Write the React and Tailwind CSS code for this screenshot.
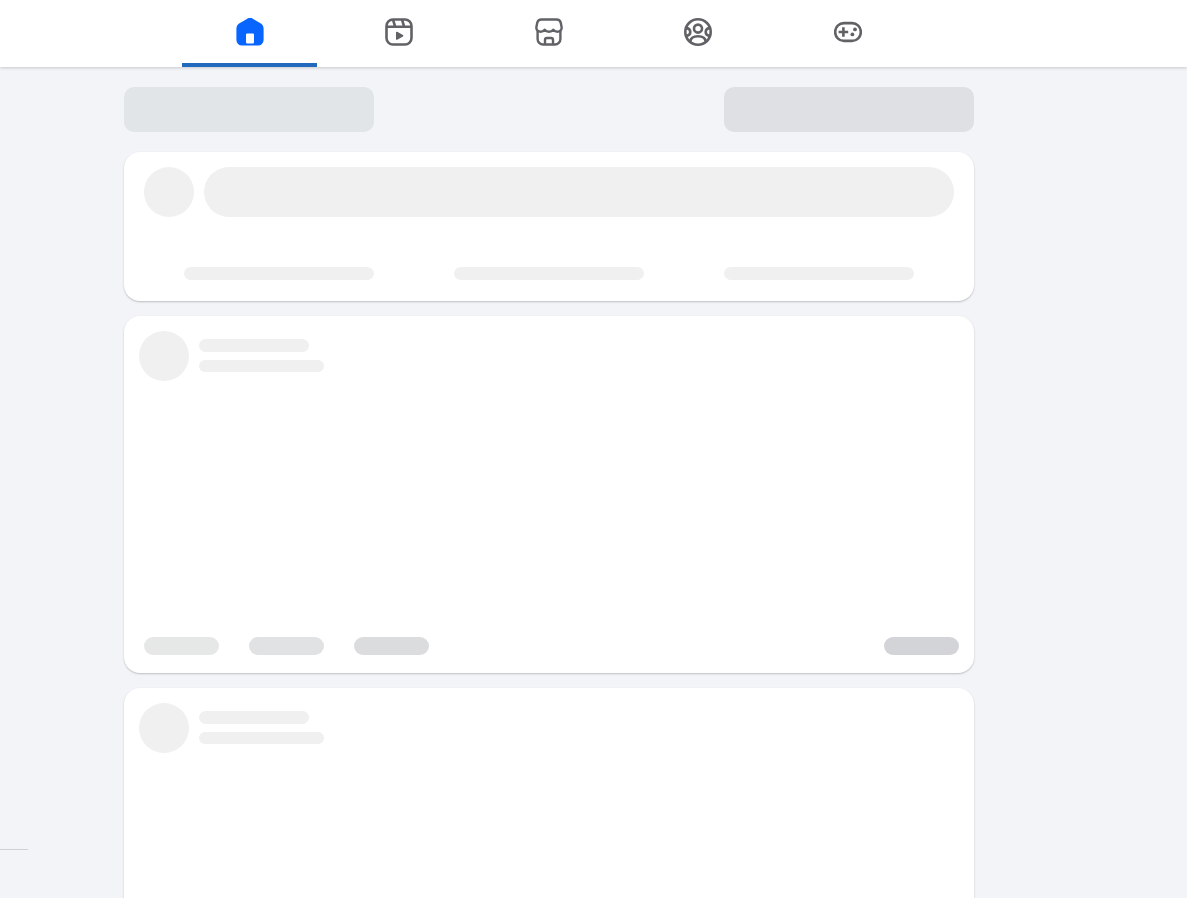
import React from 'react';
import clsx from 'clsx';

const HomeIcon = () => (
    <svg viewBox="0 0 28 28" className="w-7 h-7" fill="#0866ff">
        <path
            fillRule="evenodd"
            d="M10.9.9a5.4 5.4 0 0 1 6.2 0l7.4 4.4a6.4 6.4 0 0 1 3.1 5.4v11.4a5.5 5.5 0 0 1-5.5 5.5H5.9a5.5 5.5 0 0 1-5.5-5.5V10.7a6.4 6.4 0 0 1 3.1-5.4L10.9.9zM11.2 15.4a1.2 1.2 0 0 0-1.2 1.2v7.6a1.2 1.2 0 0 0 1.2 1.2h5.6a1.2 1.2 0 0 0 1.2-1.2v-7.6a1.2 1.2 0 0 0-1.2-1.2h-5.6z"
        />
    </svg>
);

const ReelsIcon = () => (
    <svg viewBox="0 0 28 28" className="w-7 h-7" fill="none" stroke="#606266" strokeWidth="2.6">
        <rect x="1.5" y="1.5" width="25" height="25" rx="6.5" />
        <path d="M1.5 8.8h25M8 1.5l2.2 7.3M17 1.5l2.2 7.3" />
        <path d="M11.8 14.5v6.6l5.8-3.3z" fill="#606266" strokeWidth="1.6" strokeLinejoin="round" />
    </svg>
);

const StoreIcon = () => (
    <svg viewBox="0 0 28 28" className="w-7 h-7" fill="none" stroke="#606266" strokeWidth="2.4" strokeLinejoin="round">
        <path d="M6.4 1.5h15.2c2.1 0 3.6 1.2 4.1 3.1l.9 4.4c.4 2.6-1.3 4.7-4 4.7-1.8 0-3.3-.7-4.3-2-1 1.3-2.5 2-4.3 2s-3.3-.7-4.3-2c-1 1.3-2.5 2-4.3 2-2.7 0-4.4-2.1-4-4.7l.9-4.4c.5-1.9 2-3.1 4.1-3.1z" />
        <path d="M2.6 12.500v8.500a5.500 5.500 0 0 0 5.500 5.500h11.800a5.500 5.500 0 0 0 5.500-5.500v-8.500" />
        <path d="M10 26.500v-4.500c0-1.100.9-2 2-2h4c1.100 0 2 .9 2 2v4.500" />
    </svg>
);

const GroupsIcon = () => (
    <svg viewBox="0 0 28 28" className="w-7 h-7" fill="none" stroke="#606266" strokeWidth="2.6">
        <circle cx="14" cy="14" r="12.7" />
        <circle cx="14" cy="10.6" r="4" />
        <path d="M6.3 23.8c.2-3.5 3-5.5 7.7-5.5s7.5 2 7.7 5.5" />
        <path d="M2.6 10.1c2.2.3 3.7 1.9 3.7 3.9S4.8 17.6 2.6 17.9M25.400 10.100c-2.200.3-3.700 1.900-3.700 3.900s1.500 3.600 3.700 3.900" />
    </svg>
);

const GamingIcon = () => (
    <svg viewBox="0 0 28 28" className="w-7 h-7" fill="none" stroke="#606266" strokeWidth="2.6">
        <rect x="1.2" y="5.1" width="25.6" height="17.8" rx="8.7" />
        <path d="M9.400 9.200v9.600M4.600 14h9.600" />
        <circle cx="21" cy="11.400" r="1.900" fill="#606266" stroke="none" />
        <circle cx="18.400" cy="16.400" r="1.900" fill="#606266" stroke="none" />
    </svg>
);

const tabs = [
    { label: 'Home', Icon: HomeIcon, active: true },
    { label: 'Reels', Icon: ReelsIcon },
    { label: 'Marketplace', Icon: StoreIcon },
    { label: 'Groups', Icon: GroupsIcon },
    { label: 'Gaming', Icon: GamingIcon },
];

const Header = () => (
    <header className="relative shrink-0 bg-white shadow-[0_1px_3px_rgba(0,0,0,0.18)] pr-[90px]">
        <nav className="mx-auto flex max-w-[733px] justify-between">
            {tabs.map(({ label, Icon, active }) => (
                <a
                    key={label}
                    href="#"
                    aria-label={label}
                    className="flex h-[67px] w-[135px] flex-col items-center"
                >
                    <span className="flex h-[63px] items-center">
                        <Icon />
                    </span>
                    {active && <span className="h-1 w-full bg-[#2069bd]" />}
                </a>
            ))}
        </nav>
    </header>
);

const Card = ({ className, children }) => (
    <div className={clsx('rounded-2xl bg-white shadow-[0_1px_2px_rgba(0,0,0,0.22)]', className)}>
        {children}
    </div>
);

const Composer = () => (
    <Card className="px-5 pt-[15px] pb-[21px]">
        <div className="flex gap-2.5">
            <div className="h-[50px] w-[50px] rounded-full bg-[#f0f0f0]" />
            <div className="h-[50px] flex-1 rounded-full bg-[#f0f0f0]" />
        </div>
        <div className="mt-[50px] flex gap-20 px-10">
            <div className="h-[13px] flex-1 rounded-full bg-[#f0f0f0]" />
            <div className="h-[13px] flex-1 rounded-full bg-[#f0f0f0]" />
            <div className="h-[13px] flex-1 rounded-full bg-[#f0f0f0]" />
        </div>
    </Card>
);

const Post = () => (
    <Card className="flex h-[357px] shrink-0 flex-col justify-between p-[15px] pb-[18px]">
        <div className="flex gap-2.5">
            <div className="h-[50px] w-[50px] rounded-full bg-[#f0f0f0]" />
            <div className="flex flex-col gap-2 pt-2">
                <div className="h-[13px] w-[110px] rounded-full bg-[#f0f0f0]" />
                <div className="h-3 w-[125px] rounded-full bg-[#f0f0f0]" />
            </div>
        </div>
        <div className="flex gap-[30px] pl-[5px]">
            <div className="h-[18px] w-[75px] rounded-full bg-[#e6e8e8]" />
            <div className="h-[18px] w-[75px] rounded-full bg-[#e0e2e3]" />
            <div className="h-[18px] w-[75px] rounded-full bg-[#dadcde]" />
            <div className="ml-auto h-[18px] w-[75px] rounded-full bg-[#d2d4d8]" />
        </div>
    </Card>
);

const App = () => {
    return (
        <div className="flex h-screen flex-col overflow-hidden bg-[#f2f4f8]">
            <Header />
            <div className="flex min-h-0 flex-1">
                <aside className="flex w-7 shrink-0 flex-col justify-end pb-12">
                    <hr className="border-[#ced0d4]" />
                </aside>
                <main className="flex-1 pr-[117px] pt-5" aria-busy="true">
                    <div className="mx-auto flex max-w-[850px] flex-col gap-[15px]">
                        <div className="mb-[5px] flex justify-between">
                            <div className="h-[45px] w-[250px] rounded-[10px] bg-[#e1e5e8]" />
                            <div className="h-[45px] w-[250px] rounded-[10px] bg-[#dee0e4]" />
                        </div>
                        <Composer />
                        <Post />
                        <Post />
                    </div>
                </main>
            </div>
        </div>
    );
};

export default App;
